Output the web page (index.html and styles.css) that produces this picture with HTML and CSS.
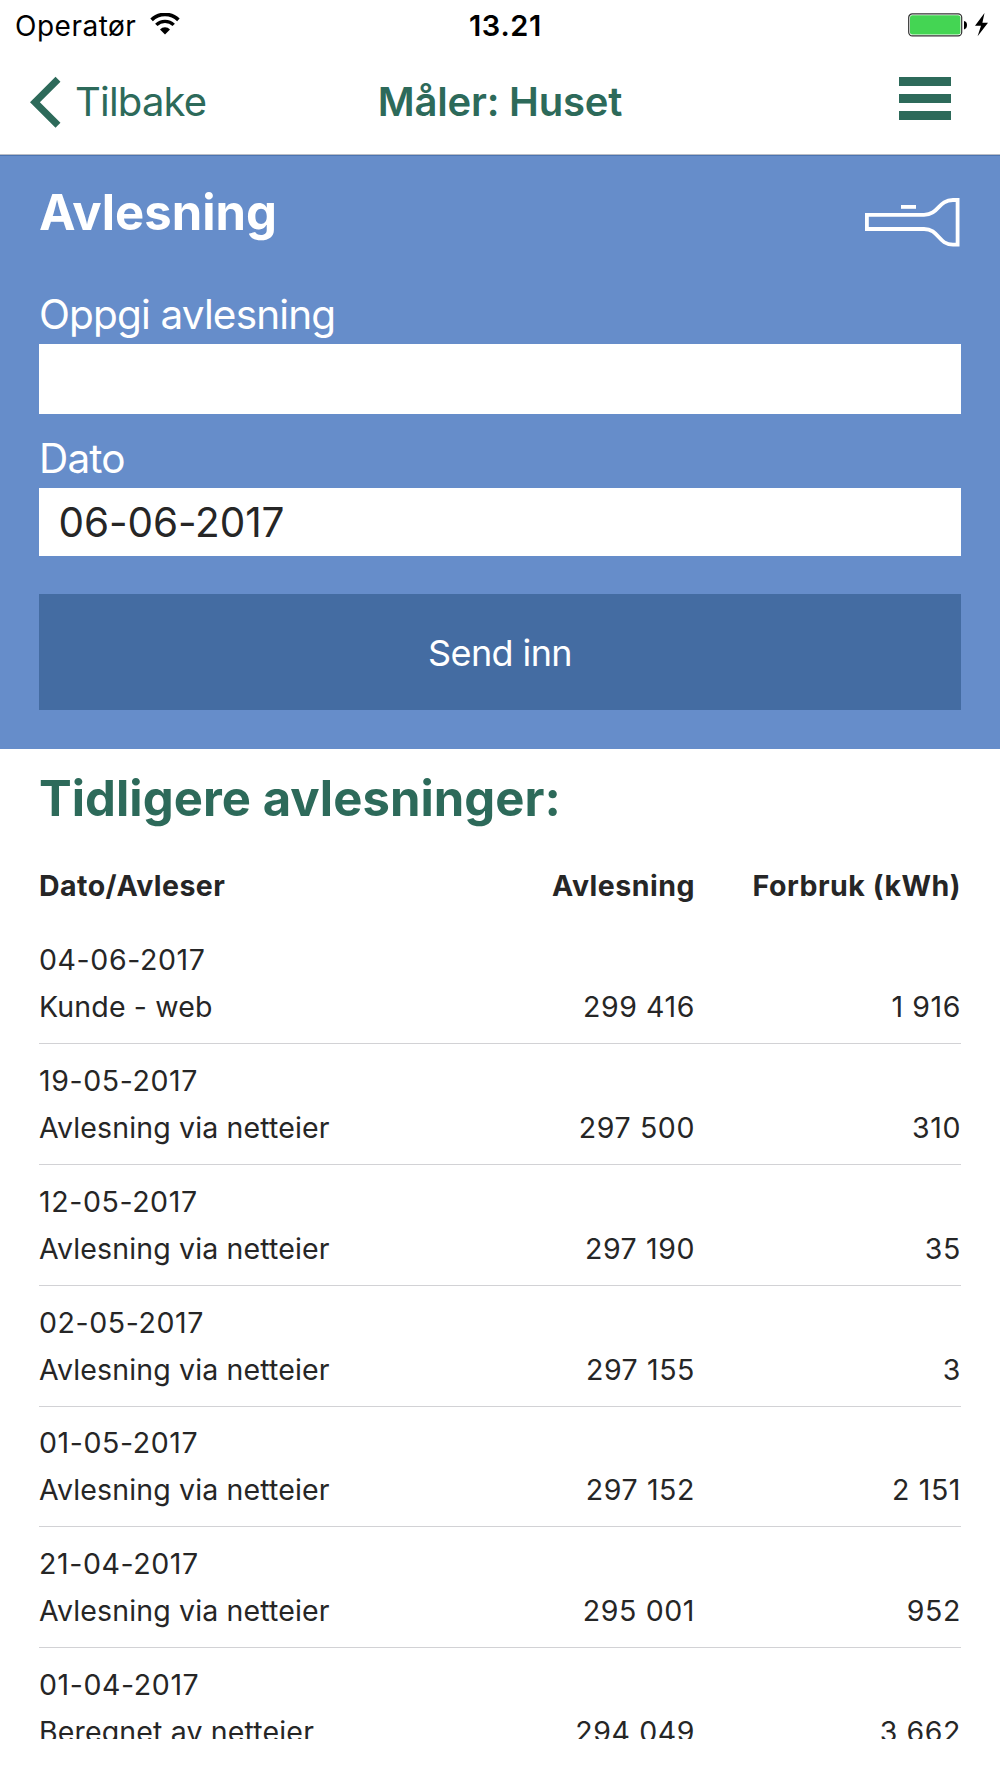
FILE: index.html
```html
<!DOCTYPE html>
<html lang="no">

<head>
    <meta charset="UTF-8" />
    <meta name="viewport" content="width=device-width, initial-scale=1.0" />
    <title>Måler: Huset</title>
    <link rel="stylesheet" href="styles.css">
</head>

<body>
    <div class="statusbar">
        <div class="carrier">
            <span class="operator">Operatør</span>
            <svg class="wifi" width="30" height="22" viewBox="0 0 30 22">
                <path d="M1.6 6.9 A19 19 0 0 1 28.4 6.9" fill="none" stroke="#000" stroke-width="3.6" />
                <path d="M6.3 11.9 A12.4 12.4 0 0 1 23.7 11.9" fill="none" stroke="#000" stroke-width="3.4" />
                <path d="M15 21.6 L10 16.4 A7 7 0 0 1 20 16.4 Z" />
            </svg>
        </div>
        <span class="clock">13.21</span>
        <svg class="battery" width="82" height="24" viewBox="0 0 82 24">
            <rect x="0.7" y="0.9" width="53" height="22" rx="3.6" fill="#fff" stroke="#333" stroke-width="1.2" />
            <rect x="2" y="2.2" width="50.4" height="19.4" rx="2.4" fill="#44d553" />
            <path d="M56 8 Q59 8.6 59 12 Q59 15.6 56 16.4 Z" />
            <path d="M76.5 0 L67 12.8 H73 L69.6 23.2 L80 9.8 H74.4 Z" />
        </svg>
    </div>

    <header class="navbar">
        <a class="back" href="#">
            <svg width="31" height="52" viewBox="0 0 31 52">
                <path d="M28 3.3 L4.9 26.3 L28 49.3" fill="none" stroke="#2d6a5a" stroke-width="7" />
            </svg>
            <span>Tilbake</span>
        </a>
        <h1>Måler: Huset</h1>
        <div class="menu">
            <span></span>
            <span></span>
            <span></span>
        </div>
    </header>

    <main>
        <form class="reading">
            <div class="reading-head">
                <h2>Avlesning</h2>
                <svg class="torch" width="97" height="50" viewBox="0 0 97 50" fill="none" stroke="#fff" stroke-width="3.8">
                    <path d="M2.9 16.8 H60 C75 16.8 74 2 89 2 H93.6 V46.7 H89 C74 46.7 75 31 60 31 H2.9 Z" />
                    <path d="M37 8.9 H52" />
                </svg>
            </div>

            <label for="value">Oppgi avlesning</label>
            <input type="text" id="value" class="value" />

            <label for="date">Dato</label>
            <input type="text" id="date" class="date" value="06-06-2017" />

            <button type="button">Send inn</button>
        </form>

        <section class="history">
            <h2>Tidligere avlesninger:</h2>

            <div class="row head">
                <span>Dato/Avleser</span>
                <span class="num">Avlesning</span>
                <span class="num">Forbruk (kWh)</span>
            </div>
            <div class="row">
                <div><span class="day">04-06-2017</span>Kunde - web</div>
                <span class="num">299 416</span>
                <span class="num">1 916</span>
            </div>
            <div class="row">
                <div><span class="day">19-05-2017</span>Avlesning via netteier</div>
                <span class="num">297 500</span>
                <span class="num">310</span>
            </div>
            <div class="row">
                <div><span class="day">12-05-2017</span>Avlesning via netteier</div>
                <span class="num">297 190</span>
                <span class="num">35</span>
            </div>
            <div class="row">
                <div><span class="day">02-05-2017</span>Avlesning via netteier</div>
                <span class="num">297 155</span>
                <span class="num">3</span>
            </div>
            <div class="row">
                <div><span class="day">01-05-2017</span>Avlesning via netteier</div>
                <span class="num">297 152</span>
                <span class="num">2 151</span>
            </div>
            <div class="row">
                <div><span class="day">21-04-2017</span>Avlesning via netteier</div>
                <span class="num">295 001</span>
                <span class="num">952</span>
            </div>
            <div class="row">
                <div><span class="day">01-04-2017</span>Beregnet av netteier</div>
                <span class="num">294 049</span>
                <span class="num">3 662</span>
            </div>
        </section>
    </main>
</body>

</html>
```
FILE: styles.css
```css
* {
    box-sizing: border-box;
}

body {
    margin: 0;
    background-color: #fff;
    color: #262626;
    font-family: Inter, "Liberation Sans", sans-serif;
}

h1,
h2 {
    margin: 0;
}

.statusbar {
    display: grid;
    grid-template-columns: 1fr auto 1fr;
    align-items: center;
    height: 51px;
    padding: 0 10px 0 15px;
    color: #000;
    font-size: 28px;
}

.operator {
    letter-spacing: 0.5px;
}

.carrier {
    display: flex;
    align-items: center;
    gap: 14px;
}

.wifi {
    margin-top: -4px;
}

.clock {
    font-size: 29px;
    font-weight: 600;
    letter-spacing: 0.7px;
    padding-left: 6px;
}

.battery {
    justify-self: end;
    margin-top: -2px;
}

.navbar {
    display: grid;
    grid-template-columns: 1fr auto 1fr;
    align-items: center;
    height: 104px;
    padding: 0 49px 2px 30px;
    border-bottom: 1px solid #b9bdc6;
    color: #2d6a5a;
    font-size: 40px;
}

.navbar h1 {
    font-size: 40px;
    font-weight: 600;
    letter-spacing: -0.2px;
    padding-left: 19px;
}

.back {
    display: flex;
    align-items: center;
    gap: 14px;
    color: #2d6a5a;
    letter-spacing: -0.8px;
    text-decoration: none;
}

.menu {
    display: flex;
    flex-direction: column;
    gap: 8px;
    justify-self: end;
    width: 52px;
    margin-top: -6px;
}

.menu span {
    height: 9px;
    background-color: #2d6a5a;
}

main {
    height: 1584px;
    overflow: hidden;
}

.reading {
    display: flex;
    flex-direction: column;
    height: 594px;
    padding: 27px 39px 39px;
    border-top: 1px solid #4b74b0;
    background-color: #668dca;
    color: #fff;
}

.reading-head {
    display: flex;
    justify-content: space-between;
    height: 60px;
    margin-bottom: 41px;
}

.reading h2 {
    font-size: 49px;
    line-height: 60px;
}

.torch {
    margin-top: 15px;
}

.reading label {
    height: 60px;
    padding-top: 1px;
    font-size: 40.5px;
    font-weight: 400;
    line-height: 60px;
    letter-spacing: -0.85px;
}

.reading input {
    width: 100%;
    padding: 0 19.5px;
    border: none;
    background-color: #fff;
    color: #262626;
    font-family: inherit;
    font-size: 40.5px;
    letter-spacing: -0.1px;
}

.value {
    height: 70px;
    margin-bottom: 14px;
}

.date {
    height: 68px;
    margin-bottom: 38px;
}

.reading button {
    height: 116px;
    padding-top: 2px;
    border: none;
    background-color: #446ca2;
    color: #fff;
    font-family: inherit;
    font-size: 36px;
    letter-spacing: -0.6px;
}

.history {
    padding: 20px 39px 0;
}

.history h2 {
    margin-bottom: 33px;
    color: #2d6a5a;
    font-size: 49px;
    line-height: 60px;
    letter-spacing: 0.05px;
}

.row {
    display: grid;
    grid-template-columns: 390px 266px 266px;
    align-items: end;
    padding: 12.75px 0 13px;
    border-bottom: 1px solid #d2d2d5;
    font-size: 28.5px;
    line-height: 47px;
    letter-spacing: 0.15px;
}

.day {
    display: block;
}

.day,
.num {
    letter-spacing: 0.6px;
}

.head {
    margin-bottom: 14.5px;
    padding: 0;
    border: none;
    font-weight: 700;
    letter-spacing: 0.45px;
}

.head .num {
    letter-spacing: 0.5px;
}

.num {
    text-align: right;
}
```
